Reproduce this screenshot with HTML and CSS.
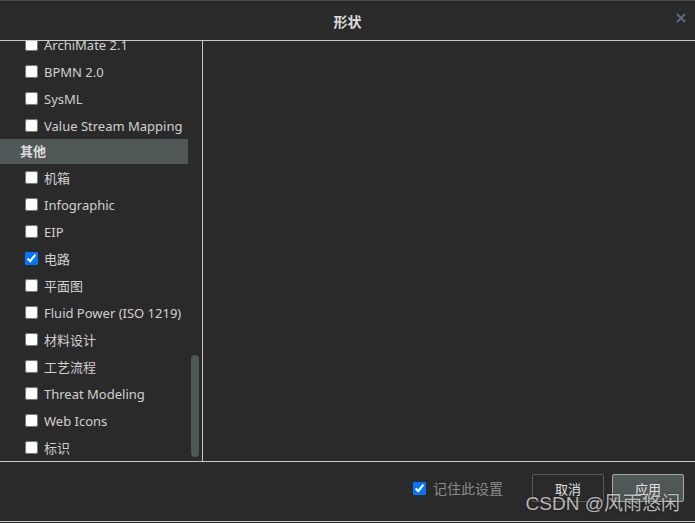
FILE: index.html
```html
<!DOCTYPE html>
<html lang="zh">
<head>
    <meta charset="UTF-8">
    <title>形状</title>
    <link rel="stylesheet" href="styles.css">
</head>
<body>
    <div class="dialog">
        <div class="titlebar">
            <span class="title">形状</span>
            <svg class="close" width="10" height="10" viewBox="0 0 10 10">
                <path d="M1 1L9 9M9 1L1 9" stroke="#5b6b80" stroke-width="2"/>
            </svg>
        </div>

        <div class="main">
            <!-- lista de bibliotecas -->
            <div class="list">
                <div class="items">
                    <label class="row"><input type="checkbox">ArchiMate 2.1</label>
                    <label class="row"><input type="checkbox">BPMN 2.0</label>
                    <label class="row"><input type="checkbox">SysML</label>
                    <label class="row"><input type="checkbox">Value Stream Mapping</label>
                    <div class="group">其他</div>
                    <label class="row"><input type="checkbox">机箱</label>
                    <label class="row"><input type="checkbox">Infographic</label>
                    <label class="row"><input type="checkbox">EIP</label>
                    <label class="row"><input type="checkbox" checked>电路</label>
                    <label class="row"><input type="checkbox">平面图</label>
                    <label class="row"><input type="checkbox">Fluid Power (ISO 1219)</label>
                    <label class="row"><input type="checkbox">材料设计</label>
                    <label class="row"><input type="checkbox">工艺流程</label>
                    <label class="row"><input type="checkbox">Threat Modeling</label>
                    <label class="row"><input type="checkbox">Web Icons</label>
                    <label class="row"><input type="checkbox">标识</label>
                </div>
                <div class="thumb"></div>
            </div>
            <div class="preview"></div>
        </div>

        <div class="footer">
            <label class="remember"><input type="checkbox" checked>记住此设置</label>
            <button class="btn">取消</button>
            <button class="btn primary">应用</button>
        </div>

        <div class="watermark">CSDN @风雨悠闲</div>
    </div>
</body>
</html>
```

FILE: styles.css
```css
body {
    margin: 0;
    background-color: #2a2a2a;
    font-family: "Noto Sans", "Noto Sans CJK SC", sans-serif;
    font-size: 13px;
    color: #d4d4d4;
}
.dialog {
    position: relative;
    width: 695px;
    height: 523px;
    overflow: hidden;
}
.titlebar {
    height: 39px;
    border-top: 1px solid #4a4a4a;
    border-bottom: 1px solid #c9c9c9;
    display: flex;
    align-items: center;
    justify-content: center;
    position: relative;
}
.title {
    font-size: 14px;
    font-weight: bold;
    color: #dcdcdc;
}
.close {
    position: absolute;
    right: 9px;
    top: 12px;
}
.main {
    display: flex;
    height: 420px;
    border-bottom: 1px solid #c9c9c9;
}
.list {
    position: relative;
    width: 202px;
    border-right: 1px solid #c9c9c9;
    overflow: hidden;
}
.items {
    margin-top: -10px;
    width: 188px;
}
.row {
    display: flex;
    align-items: center;
    height: 27px;
    padding-left: 25px;
    white-space: nowrap;
    color: #d0d0d0;
}
.row input {
    width: 13px;
    height: 13px;
    margin: 0 6px 0 0;
}
.group {
    height: 25px;
    line-height: 25px;
    padding-left: 20px;
    background-color: #4f5757;
    font-weight: bold;
    color: #dcdcdc;
}
.thumb {
    position: absolute;
    left: 191px;
    top: 314px;
    width: 8px;
    height: 102px;
    border-radius: 4px;
    background-color: #4f5757;
}
.preview {
    flex: 1;
}
.footer {
    height: 52px;
    padding-bottom: 7px;
    border-bottom: 1px solid #c9c9c9;
    display: flex;
    align-items: center;
    justify-content: flex-end;
    padding-right: 11px;
}
.remember {
    display: flex;
    align-items: center;
    font-size: 14px;
    color: #8a8a8a;
    margin-right: 21px;
}
.remember input {
    width: 13px;
    height: 13px;
    margin: 0 7px 0 0;
}
.btn {
    width: 72px;
    height: 28px;
    margin-left: 8px;
    background-color: transparent;
    border: 1px solid #5a5a5a;
    border-radius: 2px;
    color: #e0e0e0;
    font-family: "Noto Sans", "Noto Sans CJK SC", sans-serif;
    font-size: 13px;
}
.btn.primary {
    background-color: #4f5757;
    border-color: #a8a8a8;
}
.watermark {
    position: absolute;
    right: 15px;
    bottom: 8px;
    font-family: "Liberation Sans", "Noto Sans CJK SC", sans-serif;
    font-size: 19px;
    color: rgba(235, 235, 235, 0.75);
    text-shadow: 0 0 2px rgba(0, 0, 0, 0.6);
}
```
